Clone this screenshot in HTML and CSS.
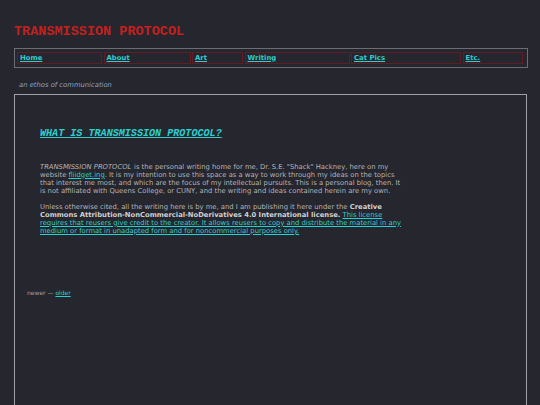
FILE: index.html
```html
<!DOCTYPE html>
<html>
<head>
<meta charset="utf-8">
<link rel="stylesheet" href="styles.css">
</head>
<body>
<header class="site-header">
  <h1 class="site-title">TRANSMISSION PROTOCOL</h1>
  <nav class="nav">
    <a class="nav-cell" href="#">Home</a>
    <a class="nav-cell" href="#">About</a>
    <a class="nav-cell" href="#">Art</a>
    <a class="nav-cell" href="#">Writing</a>
    <a class="nav-cell" href="#">Cat Pics</a>
    <a class="nav-cell" href="#">Etc.</a>
  </nav>
  <p class="tagline">an ethos of communication</p>
</header>
<main class="main-box">
  <article class="post">
    <h2 class="post-title"><a href="#">WHAT IS TRANSMISSION PROTOCOL?</a></h2>
    <p class="para"><i>TRANSMISSION PROTOCOL</i> is the personal writing home for me, Dr. S.E. "Shack" Hackney, here on my website <a href="#">fliidget.ing</a>. It is my intention to use this space as a way to work through my ideas on the topics that interest me most, and which are the focus of my intellectual pursuits. This is a personal blog, then. It is not affiliated with Queens College, or CUNY, and the writing and ideas contained herein are my own.</p>
    <p class="para">Unless otherwise cited, all the writing here is by me, and I am publishing it here under the <b>Creative Commons Attribution-NonCommercial-NoDerivatives 4.0 International license.</b> <a href="#">This license requires that reusers give credit to the creator. It allows reusers to copy and distribute the material in any medium or format in unadapted form and for noncommercial purposes only.</a></p>
  </article>
  <div class="pager">newer — <a href="#">older</a></div>
</main>
</body>
</html>
```
FILE: styles.css
```css
html, body {
  margin: 0;
  padding: 0;
  background: #26262e;
}
body {
  font-family: "DejaVu Sans", Verdana, sans-serif;
  color: #b4b4b6;
}
a {
  color: #2ccfcf;
}
.site-header {
  padding: 24px 0 0 14px;
}
.site-title {
  margin: 0;
  font-family: "Liberation Mono", "Courier New", monospace;
  font-weight: bold;
  font-size: 13.5px;
  line-height: 16px;
  color: #c4201e;
}
.nav {
  margin-top: 7.5px;
  width: 508px;
  border: 1px solid #6c6c74;
  padding: 3px 2px;
  display: grid;
  grid-template-columns: 85px 87px 51px 105px 110px 60px;
  column-gap: 1.5px;
}
.nav-cell {
  display: block;
  border: 1px solid #5e1e24;
  height: 10.5px;
  padding: 0 2px;
  font-size: 6.9px;
  line-height: 11px;
  font-weight: bold;
  color: #2ccfcf;
}
.tagline {
  margin: 13px 0 0 5px;
  font-style: italic;
  font-size: 6.8px;
  line-height: 8px;
  color: #8aa0c0;
}
.main-box {
  margin: 4.7px 13px 0 14px;
  border: 1px solid #a0a0a8;
  border-bottom: none;
  height: 320px;
  padding: 0 0 0 12px;
}
.post {
  padding: 33px 0 0 13px;
  width: 364px;
}
.post-title {
  margin: 0;
  font-family: "Liberation Mono", "Courier New", monospace;
  font-style: italic;
  font-weight: bold;
  font-size: 10.1px;
  line-height: 12px;
}
.post-title a {
  color: #2ccfcf;
}
.para {
  margin: 0 0 7.5px 0;
  font-size: 6.8px;
  line-height: 8.1px;
}
.para i {
  padding-right: 0.5px;
}
.post-title + .para {
  margin-top: 23px;
}
.para b {
  color: #d0d0d2;
}
.pager {
  margin-top: 54px;
  font-size: 6px;
  line-height: 8px;
  color: #a0a0a4;
}
```
